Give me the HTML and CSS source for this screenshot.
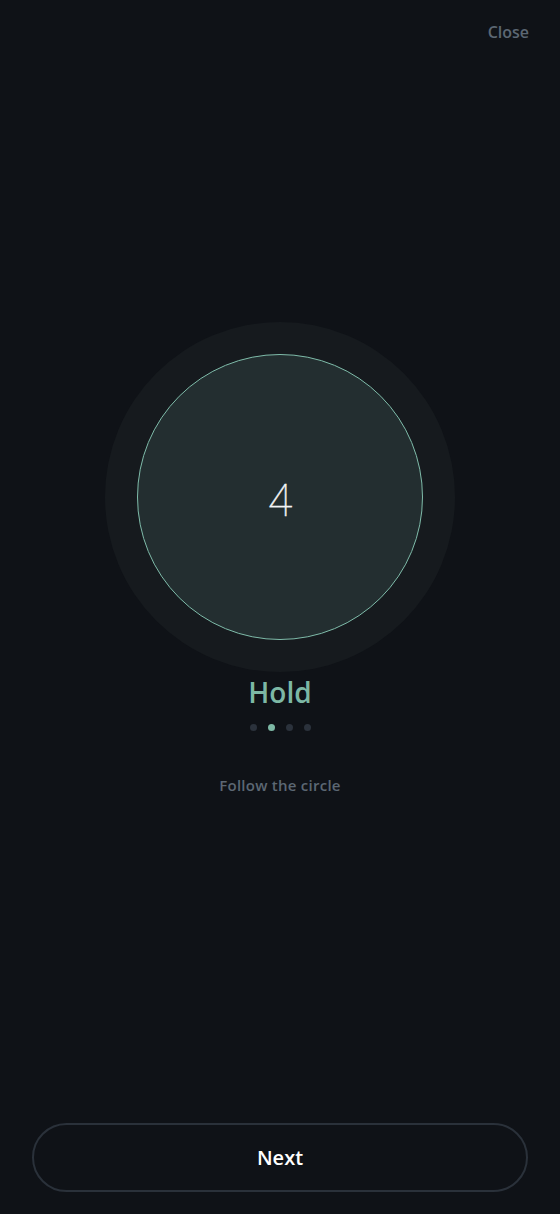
FILE: index.html
```html
<!DOCTYPE html>
<html lang="en">
<head>
<meta charset="utf-8">
<title>Breathe</title>
<link rel="stylesheet" href="styles.css">
</head>
<body>
<div class="page">
  <header class="top">
    <span class="close">Close</span>
  </header>
  <main class="main">
    <div class="ring">
      <div class="core"><span class="count">4</span></div>
    </div>
    <div class="phase">Hold</div>
    <div class="dots">
      <span class="dot"></span>
      <span class="dot active"></span>
      <span class="dot"></span>
      <span class="dot"></span>
    </div>
    <p class="hint">Follow the circle</p>
  </main>
  <div class="footer">
    <button class="next">Next</button>
  </div>
</div>
</body>
</html>
```

FILE: styles.css
```css
html, body {
  margin: 0;
  padding: 0;
  background: #0f1217;
}
body {
  font-family: "Open Sans", "Noto Sans", sans-serif;
}
.page {
  height: 1214px;
  display: flex;
  flex-direction: column;
}
.top {
  display: flex;
  justify-content: flex-end;
  padding: 20px 31px 0 0;
}
.close {
  font-size: 16px;
  line-height: 24px;
  font-weight: 600;
  color: #5c6773;
}
.main {
  display: flex;
  flex-direction: column;
  align-items: center;
}
.ring {
  margin-top: 278px;
  width: 350px;
  height: 350px;
  border-radius: 50%;
  background: #161a1e;
  display: flex;
  align-items: center;
  justify-content: center;
}
.core {
  width: 284px;
  height: 284px;
  border-radius: 50%;
  background: #232e30;
  border: 1.5px solid #7fbcaa;
  display: flex;
  align-items: center;
  justify-content: center;
}
.count {
  font-family: "Roboto", sans-serif;
  font-weight: 100;
  font-size: 45px;
  line-height: 1;
  color: #f2f4f5;
  margin-top: 6px;
  -webkit-text-stroke: 0.4px #f2f4f5;
}
.phase {
  margin-top: 3px;
  font-size: 28px;
  line-height: 34px;
  font-weight: 600;
  color: #7db8a5;
}
.dots {
  margin-top: 15px;
  display: flex;
  gap: 11px;
}
.dot {
  width: 7px;
  height: 7px;
  border-radius: 50%;
  background: #2b323c;
}
.dot.active {
  background: #7db8a5;
}
.hint {
  margin: 44px 0 0;
  font-size: 15px;
  line-height: 20px;
  font-weight: 600;
  letter-spacing: 0.25px;
  color: #5c6773;
}
.footer {
  margin-top: auto;
  padding: 0 32px 22px;
}
.next {
  width: 100%;
  height: 69px;
  border-radius: 35px;
  border: 2px solid #2a313a;
  background: transparent;
  color: #ffffff;
  font-family: "Open Sans", "Noto Sans", sans-serif;
  font-size: 20px;
  font-weight: 600;
  cursor: pointer;
}
```
